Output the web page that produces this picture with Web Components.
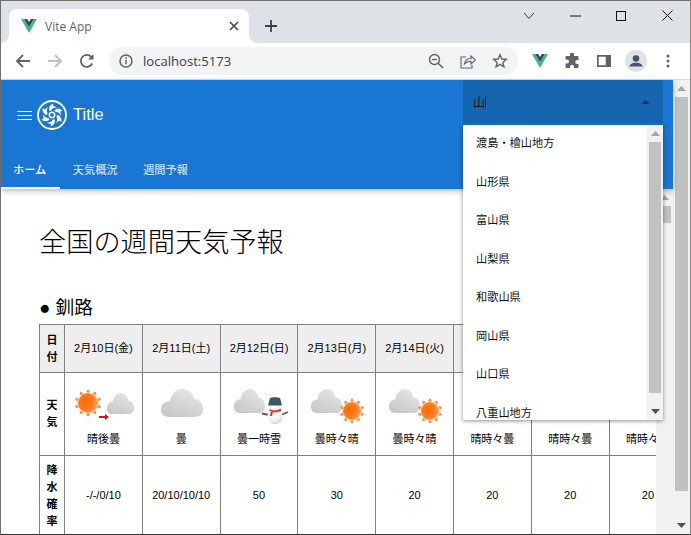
<!DOCTYPE html>
<html lang="ja">
<head>
<meta charset="utf-8">
<title>Vite App</title>
<style>
html,body{margin:0;padding:0;background:#fff;overflow:hidden}
body{font-family:"Liberation Sans","Noto Sans CJK JP",sans-serif}
</style>
</head>
<body>
<app-window>
  <chrome-tabstrip></chrome-tabstrip>
  <chrome-toolbar></chrome-toolbar>
  <page-view></page-view>
</app-window>
<script>
const CJK='"Liberation Sans","Noto Sans CJK JP",sans-serif';
const def=(name,html,init)=>{
  customElements.define(name,class extends HTMLElement{
    connectedCallback(){
      if(this.shadowRoot)return;
      const r=this.attachShadow({mode:'open'});
      r.innerHTML=typeof html==='function'?html(this):html;
    }
  });
};
const vue=(w,h)=>`<svg width="${w}" height="${h}" viewBox="0 0 16 14"><path fill="#41b883" d="M0 0h3.2L8 8.2 12.8 0H16L8 14z"/><path fill="#35495e" d="M3.2 0h3L8 3 9.800 0h3L8 8.200z"/></svg>`;

def('app-window',`<style>
:host{display:flex;flex-direction:column;width:691px;height:535px;box-sizing:border-box;border:1px solid #6f6f6f;border-bottom-color:#333;border-right-color:#8a8a8a;overflow:hidden;background:#fff}
</style><slot></slot>`);

def('chrome-tabstrip',`<style>
:host{display:flex;height:42px;background:#dee1e6;flex:none;font-family:"Open Sans","Noto Sans",sans-serif}
.tab{position:relative;align-self:flex-end;margin-left:8px;width:240px;height:34px;background:#fff;border-radius:8px 8px 0 0;display:flex;align-items:center;box-sizing:border-box;padding:0 10px 0 12px;gap:8px}
.tab::before,.tab::after{content:"";position:absolute;bottom:0;width:8px;height:8px}
.tab::before{left:-8px;background:radial-gradient(circle at 0 0,#dee1e6 7.5px,#fff 8px)}
.tab::after{right:-8px;background:radial-gradient(circle at 100% 0,#dee1e6 7.5px,#fff 8px)}
.t{flex:1;font-size:12px;color:#5f6368;white-space:nowrap}
.x{display:flex}
.plus{align-self:flex-end;margin:0 0 4px 15px;width:16px;height:26px;display:flex;align-items:center}
.sp{flex:1}
.ctl{width:46px;height:29px;display:flex;align-items:center;justify-content:center}
</style>
<div class="tab">${vue(16,14)}<span class="t">Vite App</span>
<svg class="x" width="10" height="10" viewBox="0 0 10 10"><path d="M1 1l8 8M9 1l-8 8" stroke="#44474a" stroke-width="1.6"/></svg></div>
<div class="plus"><svg width="14" height="14" viewBox="0 0 14 14"><path d="M7 1v12M1 7h12" stroke="#3c4043" stroke-width="1.8"/></svg></div>
<div class="sp"></div>
<div class="ctl"><svg width="12" height="8" viewBox="0 0 12 8"><path d="M1 1l5 5.500L11 1" fill="none" stroke="#333" stroke-width="1"/></svg></div>
<div class="ctl"><svg width="11" height="2" viewBox="0 0 11 2"><path d="M0 1h11" stroke="#111" stroke-width="1"/></svg></div>
<div class="ctl"><svg width="10" height="10" viewBox="0 0 10 10"><rect x=".5" y=".5" width="9" height="9" fill="none" stroke="#111"/></svg></div>
<div class="ctl"><svg width="11" height="11" viewBox="0 0 11 11"><path d="M.5.500l10 10M10.500.500l-10 10" stroke="#111" stroke-width="1"/></svg></div>`);

def('chrome-toolbar',`<style>
:host{display:flex;align-items:center;height:37px;box-sizing:border-box;background:#fff;border-bottom:1px solid #dadce0;flex:none;padding:0 5px 1px 6px;font-family:"Open Sans","Noto Sans",sans-serif}
.b{width:32px;height:32px;display:flex;align-items:center;justify-content:center;flex:none}
.addr{width:409px;height:28px;margin:0 6px;border-radius:14px;background:#f1f3f4;display:flex;align-items:center;box-sizing:border-box;padding:0 2px 0 10px;flex:none}
.u{flex:1;font-size:13.100px;color:#3c4043;margin-left:10px;white-space:nowrap}
.a{width:32px;height:28px;display:flex;align-items:center;justify-content:center}
</style>
<div class="b"><svg width="16" height="16" viewBox="0 0 16 16"><path d="M15 8H2M8 2L2 8l6 6" fill="none" stroke="#5f6368" stroke-width="1.800"/></svg></div>
<div class="b"><svg width="16" height="16" viewBox="0 0 16 16"><path d="M1 8h13M8 2l6 6-6 6" fill="none" stroke="#bdc1c6" stroke-width="1.800"/></svg></div>
<div class="b"><svg width="16" height="16" viewBox="0 0 16 16"><path d="M13.300 10.500A6 6 0 1 1 12.300 3.800" fill="none" stroke="#5f6368" stroke-width="1.800"/><path d="M14.500 1v5.500H9z" fill="#5f6368"/></svg></div>
<div class="addr">
<svg width="14" height="14" viewBox="0 0 14 14"><circle cx="7" cy="7" r="6" fill="none" stroke="#5f6368" stroke-width="1.500"/><path d="M7 6v4.200" stroke="#5f6368" stroke-width="1.500"/><circle cx="7" cy="4.100" r=".9" fill="#5f6368"/></svg>
<span class="u">localhost:5173</span>
<div class="a"><svg width="16" height="16" viewBox="0 0 16 16"><circle cx="6.500" cy="6.500" r="5" fill="none" stroke="#5f6368" stroke-width="1.400"/><path d="M10.200 10.200L15 15" stroke="#5f6368" stroke-width="1.600"/><path d="M4 6.500h5" stroke="#5f6368" stroke-width="1.300"/></svg></div>
<div class="a"><svg width="16" height="16" viewBox="0 0 16 16"><path d="M6 4H1v11h11v-3" fill="none" stroke="#5f6368" stroke-width="1.100"/><path d="M4.500 11c.5-3.500 3-5.500 6.500-5.500V3l4.500 4-4.500 4V8.300c-2.700 0-4.800.800-6.500 2.700z" fill="none" stroke="#5f6368" stroke-width="1.100"/></svg></div>
<div class="a"><svg width="16" height="16" viewBox="0 0 16 16"><path d="M8 1.800l1.800 4.200 4.500.4-3.400 3 1 4.400L8 11.400l-3.900 2.400 1-4.400-3.400-3 4.500-.4z" fill="none" stroke="#5f6368" stroke-width="1.400"/></svg></div>
</div>
<div class="b">${vue(16,14)}</div>
<div class="b"><svg width="16" height="16" viewBox="0 0 16 16"><path fill="#5f6368" d="M6 1.200a2 2 0 0 1 4 0V3h3.500a1 1 0 0 1 1 1v3h-1.300a2 2 0 0 0 0 4h1.300v3a1 1 0 0 1-1 1H10v-1.200a2 2 0 0 0-4 0V15H2.500a1 1 0 0 1-1-1v-3.500H3a2 2 0 0 0 0-4H1.500V4a1 1 0 0 1 1-1H6z"/></svg></div>
<div class="b"><svg width="14" height="12" viewBox="0 0 14 12"><path fill="#5f6368" fill-rule="evenodd" d="M0 0h14v12H0zM1.700 1.700v8.600h7V1.700z"/></svg></div>
<div class="b"><svg width="22" height="22" viewBox="0 0 22 22"><circle cx="11" cy="11" r="11" fill="#dee1e6"/><circle cx="11" cy="8.500" r="3.300" fill="#4a5468"/><path d="M4.500 16.500c0-2.500 3-3.800 6.500-3.800s6.500 1.300 6.500 3.800z" fill="#4a5468"/></svg></div>
<div class="b"><svg width="4" height="14" viewBox="0 0 4 14"><circle cx="2" cy="2" r="1.500" fill="#5f6368"/><circle cx="2" cy="7" r="1.500" fill="#5f6368"/><circle cx="2" cy="12" r="1.500" fill="#5f6368"/></svg></div>`);

def('scroll-bar',h=>{
  const pre=+h.getAttribute('pre')||0, thumb=+h.getAttribute('thumb')||0, inset=h.getAttribute('inset')||'2', down=h.hasAttribute('down');
  return `<style>
:host{display:flex;flex-direction:column;width:${h.getAttribute('w')||17}px;flex:none;background:#f1f1f1;box-sizing:border-box;overflow:hidden}
.ar{height:17px;flex:none;display:flex;align-items:center;justify-content:center}
.gap{flex:none}.th{background:#c1c1c1;margin:0 ${inset}px;flex:none}.rest{flex:1}
</style>
<div class="ar"><svg width="9" height="5" viewBox="0 0 9 5"><path d="M4.500 0L9 5H0z" fill="#a3a3a3"/></svg></div>
<div class="gap" style="height:${pre}px"></div><div class="th" style="height:${thumb}px"></div><div class="rest"></div>
${down?'<div class="ar"><svg width="9" height="5" viewBox="0 0 9 5"><path d="M4.500 5L9 0H0z" fill="#505050"/></svg></div>':''}`;
});

def('region-select',()=>{
  const items=['渡島・檜山地方','山形県','富山県','山梨県','和歌山県','岡山県','山口県','八重山地方'];
  return `<style>
:host{display:block;position:relative;width:200px;height:43px;background:#1565b0;border-radius:3px 3px 0 0;font:11.200px ${CJK};color:#111}
.f{display:flex;align-items:center;height:43px;padding:0 13px 0 10px;box-sizing:border-box;justify-content:space-between;font-size:12px}
.v{display:flex;align-items:center}.c{width:1px;height:14px;background:#0a1a30;margin-left:0}
.menu{position:absolute;left:0;top:45px;width:200px;height:295px;background:#fff;display:flex;overflow:hidden;box-shadow:0 1px 4px rgba(0,0,0,.45);z-index:5}
.list{flex:1;overflow:hidden;display:flex;flex-direction:column;min-width:0;margin-top:-2px}
.it{flex:none;height:38.500px;display:flex;align-items:center;padding-left:13px;color:#111}
scroll-bar{height:295px}
</style>
<div class="f"><span class="v">山<i class="c"></i></span><svg width="9" height="4" viewBox="0 0 9 4"><path d="M4.500 0L9 4H0z" fill="#0f3768"/></svg></div>
<div class="menu"><div class="list">${items.map(i=>`<div class="it">${i}</div>`).join('')}</div><scroll-bar w="16" pre="0" thumb="251" down></scroll-bar></div>`;
});

def('quasar-logo',`<style>:host{display:block;width:30px;height:30px;flex:none}</style>
<svg width="30" height="30" viewBox="-15 -15 30 30">
<circle r="14" fill="none" stroke="#fff" stroke-width="1.800"/>
<circle r="2.700" fill="none" stroke="#fff" stroke-width="1.500"/>
${[0,60,120,180,240,300].map(a=>`<path transform="rotate(${a})" fill="#fff" d="M-2.800-4.300C-3.500-7.500-2-10.300 1.300-11.500L1-9.200 5.300-7.400C2.600-7.800.2-6.800-.6-4.800z"/>`).join('')}
</svg>`);

def('app-header',`<style>
:host{display:block;background:#1976d2;color:#fff;height:109px;flex:none;position:relative;z-index:3;box-shadow:0 2px 6px rgba(0,0,0,.28);font-family:${CJK}}
.top{display:flex;height:70px;padding-left:16px;padding-right:10px}
.brand{display:flex;align-items:center;flex:1}
.ham{width:15px;display:flex;margin-right:5px}
.title{font-size:16.500px;margin:0 0 2px 6px}
.tabs{display:flex;height:39px}
.tab{padding:0 12.800px 2px 12.800px;display:flex;align-items:center;font-size:11.200px;font-weight:500;color:rgba(255,255,255,.78);box-sizing:border-box;position:relative;white-space:nowrap}
.tab.on{color:#fff;width:59px;padding-left:12px}
.tab.on::after{content:"";position:absolute;left:0;right:0;bottom:0;height:2px;background:#fff}
</style>
<div class="top"><div class="brand"><span class="ham"><svg width="15" height="9" viewBox="0 0 15 9"><path d="M0 .5h15M0 4.500h15M0 8.500h15" stroke="#fff" stroke-width="1"/></svg></span><quasar-logo></quasar-logo><span class="title">Title</span></div><region-select></region-select></div>
<div class="tabs"><div class="tab on">ホーム</div><div class="tab">天気概況</div><div class="tab">週間予報</div></div>`);

const sun=(x,y,r)=>`<g transform="translate(${x} ${y})">${[0,36,72,108,144,180,216,252,288,324].map(a=>`<path transform="rotate(${a})" d="M-2 ${-r-.6}L-.7 ${-r-3.300}L.7 ${-r-3.300}L2 ${-r-.6}z" fill="#ff8c3a"/>`).join('')}<circle r="${r}" fill="url(#s)"/></g>`;
const cloud=(x,y,w,h)=>`<svg x="${x}" y="${y}" width="${w}" height="${h}" viewBox="0 0 42 28" preserveAspectRatio="none"><path fill="url(#c)" d="M8 28C3 28 0 25 0 20.500 0 15.500 4 12 9 12 10 5 15 0 21.500 0 27.500 0 32 4 33 10 38.500 10 42 14.500 42 20 42 25 38.500 28 34 28z"/></svg>`;
const snowman=(x,y)=>`<g transform="translate(${x} ${y})">
<path d="M-6 3L-13 1.500M6 3L13 0" stroke="#7a5237" stroke-width="1.800"/>
<circle cy="4.500" r="7.500" fill="url(#w)"/><circle cy="-4" r="5.500" fill="url(#w)"/>
<path d="M-7-6.500L-5-14C-3-15 3-15 5-14L7-6.500z" fill="#3d5568"/>
<path d="M-5.500-3C-2-1 2-1 6-3.500L6-1C3 0-2 1-5.500-1zM-4-1l-1 5 2 0 1-4z" fill="#d8352a"/></g>`;
const DEFS=`<defs>
<radialGradient id="s" cx=".35" cy=".45" r=".75"><stop offset="0" stop-color="#ff6a00"/><stop offset=".55" stop-color="#ff7d1f"/><stop offset="1" stop-color="#ffae7a"/></radialGradient>
<linearGradient id="c" x1=".7" y1="0" x2=".1" y2="1"><stop offset="0" stop-color="#e4e4e4"/><stop offset="1" stop-color="#c6c6c6"/></linearGradient>
<radialGradient id="w" cx=".4" cy=".3" r=".85"><stop offset="0" stop-color="#fff"/><stop offset=".6" stop-color="#f2f2f2"/><stop offset="1" stop-color="#b8b8b8"/></radialGradient>
</defs>`;
const ICONS={
 sunCloud:sun(23,30,10)+cloud(42,20,27,21)+`<path d="M34 43h6v-2l4 3-4 3v-2h-6z" fill="#e0101a"/>`,
 cloud:cloud(18,16,42,28),
 cloudSnow:cloud(13,16,31,24)+snowman(54,39),
 cloudSun:cloud(13,16,31,24)+sun(54,38,9),
 sunC2:sun(23,30,10)+cloud(43,24,27,21)
};
def('wx-icon',h=>`<style>:host{display:block;width:77px;height:56px}</style><svg width="77" height="56">${DEFS}${ICONS[h.getAttribute('kind')]}</svg>`);

def('weather-table',()=>{
  const days=['2月10日(金)','2月11日(土)','2月12日(日)','2月13日(月)','2月14日(火)','2月15日(水)','2月16日(木)','2月17日(金)'];
  const kinds=['sunCloud','cloud','cloudSnow','cloudSun','cloudSun','sunC2','sunC2','sunC2'];
  const tx=['晴後曇','曇','曇一時雪','曇時々晴','曇時々晴','晴時々曇','晴時々曇','晴時々曇'];
  const rain=['-/-/0/10','20/10/10/10','50','30','20','20','20','20'];
  return `<style>
:host{display:block;font:11px/1.2 ${CJK};color:#000}
table{border-collapse:collapse;table-layout:fixed;width:${25+77.8*8}px}
th,td{border:1px solid #808080;padding:0;text-align:center;vertical-align:middle;font-weight:400}
col.f{width:25px}col.d{width:77.800px}
thead th{background:#eee;height:47px}
tbody tr:nth-child(1) > *{height:82px}
tbody tr:nth-child(1) td{vertical-align:top}
tbody tr:nth-child(2) > *{height:80px}
th.h{font-weight:700;line-height:17px;background:#fff}
thead th.h{background:#eee}
.n{display:block;width:12px;margin:0 auto;word-break:break-all}
.w{display:flex;flex-direction:column;align-items:center}
.w span{margin-top:4px;white-space:nowrap}
</style>
<table><colgroup><col class="f">${days.map(()=>'<col class="d">').join('')}</colgroup>
<thead><tr><th class="h"><span class="n">日付</span></th>${days.map(d=>`<th>${d}</th>`).join('')}</tr></thead>
<tbody><tr><th class="h"><span class="n">天気</span></th>${kinds.map((k,i)=>`<td><div class="w"><wx-icon kind="${k}"></wx-icon><span>${tx[i]}</span></div></td>`).join('')}</tr>
<tr><th class="h"><span class="n">降水確率</span></th>${rain.map(r=>`<td>${r}</td>`).join('')}</tr></tbody></table>`;
});

def('forecast-panel',`<style>
:host{display:flex;flex:1;min-height:0;position:relative;z-index:1}
.c{flex:1;min-width:0;overflow:hidden;padding:36px 0 0 38px;font-family:${CJK};color:#000}
h1{font-size:27.200px;font-weight:300;line-height:36px;margin:0;white-space:nowrap}
h3{font-size:18.700px;font-weight:400;line-height:24px;margin:35px 0 4px;white-space:nowrap}
scroll-bar{height:100%}
</style>
<div class="c"><h1>全国の週間天気予報</h1><h3>● 釧路</h3><weather-table></weather-table></div>
<scroll-bar pre="0" thumb="17"></scroll-bar>`);

def('page-view',`<style>
:host{display:flex;flex:1;min-height:0}
.m{flex:1;min-width:0;display:flex;flex-direction:column;position:relative}
</style>
<div class="m"><app-header></app-header><forecast-panel></forecast-panel></div>
<scroll-bar pre="0" thumb="394" down></scroll-bar>`);
</script>
</body>
</html>
